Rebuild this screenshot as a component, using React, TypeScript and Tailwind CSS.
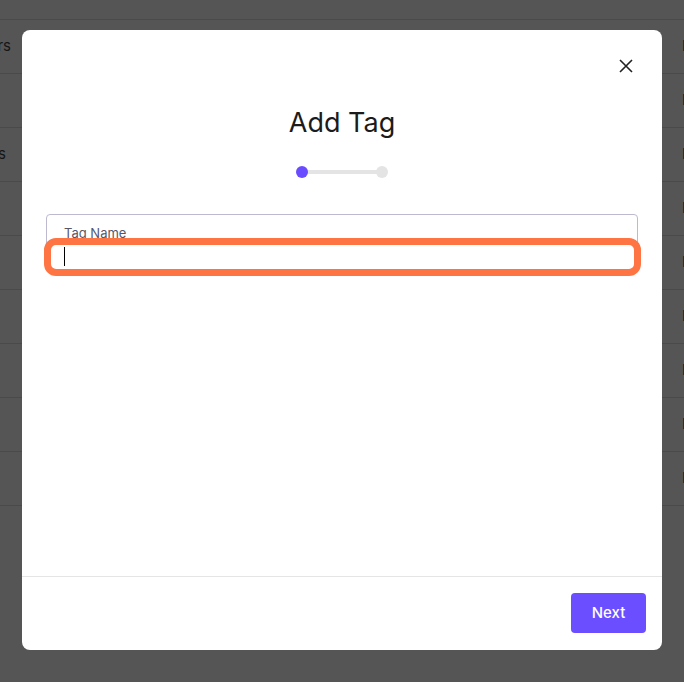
import type { JSX } from 'react'

const rows = [
  { left: 'Users', leftWidth: 'w-[11px]', right: 'N' },
  { left: '', leftWidth: 'w-[11px]', right: 'N' },
  { left: 'Tags', leftWidth: 'w-[6px]', right: 'N' },
  { left: '', leftWidth: 'w-[11px]', right: 'N' },
  { left: '', leftWidth: 'w-[11px]', right: 'N' },
  { left: '', leftWidth: 'w-[11px]', right: 'N' },
  { left: '', leftWidth: 'w-[11px]', right: 'N' },
  { left: '', leftWidth: 'w-[11px]', right: 'N' },
  { left: '', leftWidth: 'w-[11px]', right: 'N' },
]

function BackgroundTable(): JSX.Element {
  return (
    <div className="h-[682px] w-[684px] overflow-hidden bg-[#555555]">
      <div className="h-[20px] border-b border-[#4a4a4a]" />
      {rows.map((row, index) => (
        <div
          key={index}
          className="flex h-[54px] items-center justify-between border-b border-[#4a4a4a] text-[15px] text-[#151515]"
        >
          <div className={`flex ${row.leftWidth} justify-end overflow-hidden whitespace-nowrap`}>
            {row.left}
          </div>
          <div className="w-[2px] overflow-hidden whitespace-nowrap">{row.right}</div>
        </div>
      ))}
    </div>
  )
}

function CloseIcon(): JSX.Element {
  return (
    <svg width="16" height="16" viewBox="0 0 16 16" fill="none" stroke="#222" strokeWidth="1.6">
      <path d="M2 2L14 14M14 2L2 14" />
    </svg>
  )
}

export default function App(): JSX.Element {
  return (
    <div className="relative h-[682px] w-[684px] overflow-hidden font-['Inter',_'Noto_Sans',_sans-serif]">
      <BackgroundTable />

      <div className="absolute inset-0 flex justify-center pt-[30px]">
        <div className="flex h-[620px] w-[640px] flex-col rounded-lg bg-white">
          <div className="flex justify-end pr-[28px] pt-[28px]">
            <button type="button" className="flex h-4 w-4 items-center justify-center">
              <CloseIcon />
            </button>
          </div>

          <h2 className="mt-[31px] text-center text-[27px] leading-[36px] text-[#1b1b1b]">Add Tag</h2>

          <div className="mt-[25px] flex justify-center">
            <div className="flex w-[92px] items-center">
              <span className="relative z-10 h-3 w-3 rounded-full bg-[#6a4bff]" />
              <span className="-mx-1 h-1 flex-1 bg-[#e4e4e4]" />
              <span className="relative z-10 h-3 w-3 rounded-full bg-[#e4e4e4]" />
            </div>
          </div>

          <div className="relative mx-6 mt-[36px] h-[56px] rounded border-[1.5px] border-[#bdb9cf] px-[17px] pt-[10px]">
            <div className="text-[13px] leading-4 text-[#55566c]">Tag Name</div>
            <div className="mt-[6px] h-[19px] w-px bg-black" />
            <div className="absolute left-[-3px] top-[23px] h-[38px] w-[597px] rounded-xl border-[7px] border-[#ff7443]" />
          </div>

          <div className="flex-1" />

          <div className="flex justify-end border-t border-[#e5e5e5] px-4 pb-[17px] pt-4">
            <button
              type="button"
              className="h-10 w-[75px] rounded bg-[#6b4eff] text-[15px] font-medium text-white"
            >
              Next
            </button>
          </div>
        </div>
      </div>
    </div>
  )
}
